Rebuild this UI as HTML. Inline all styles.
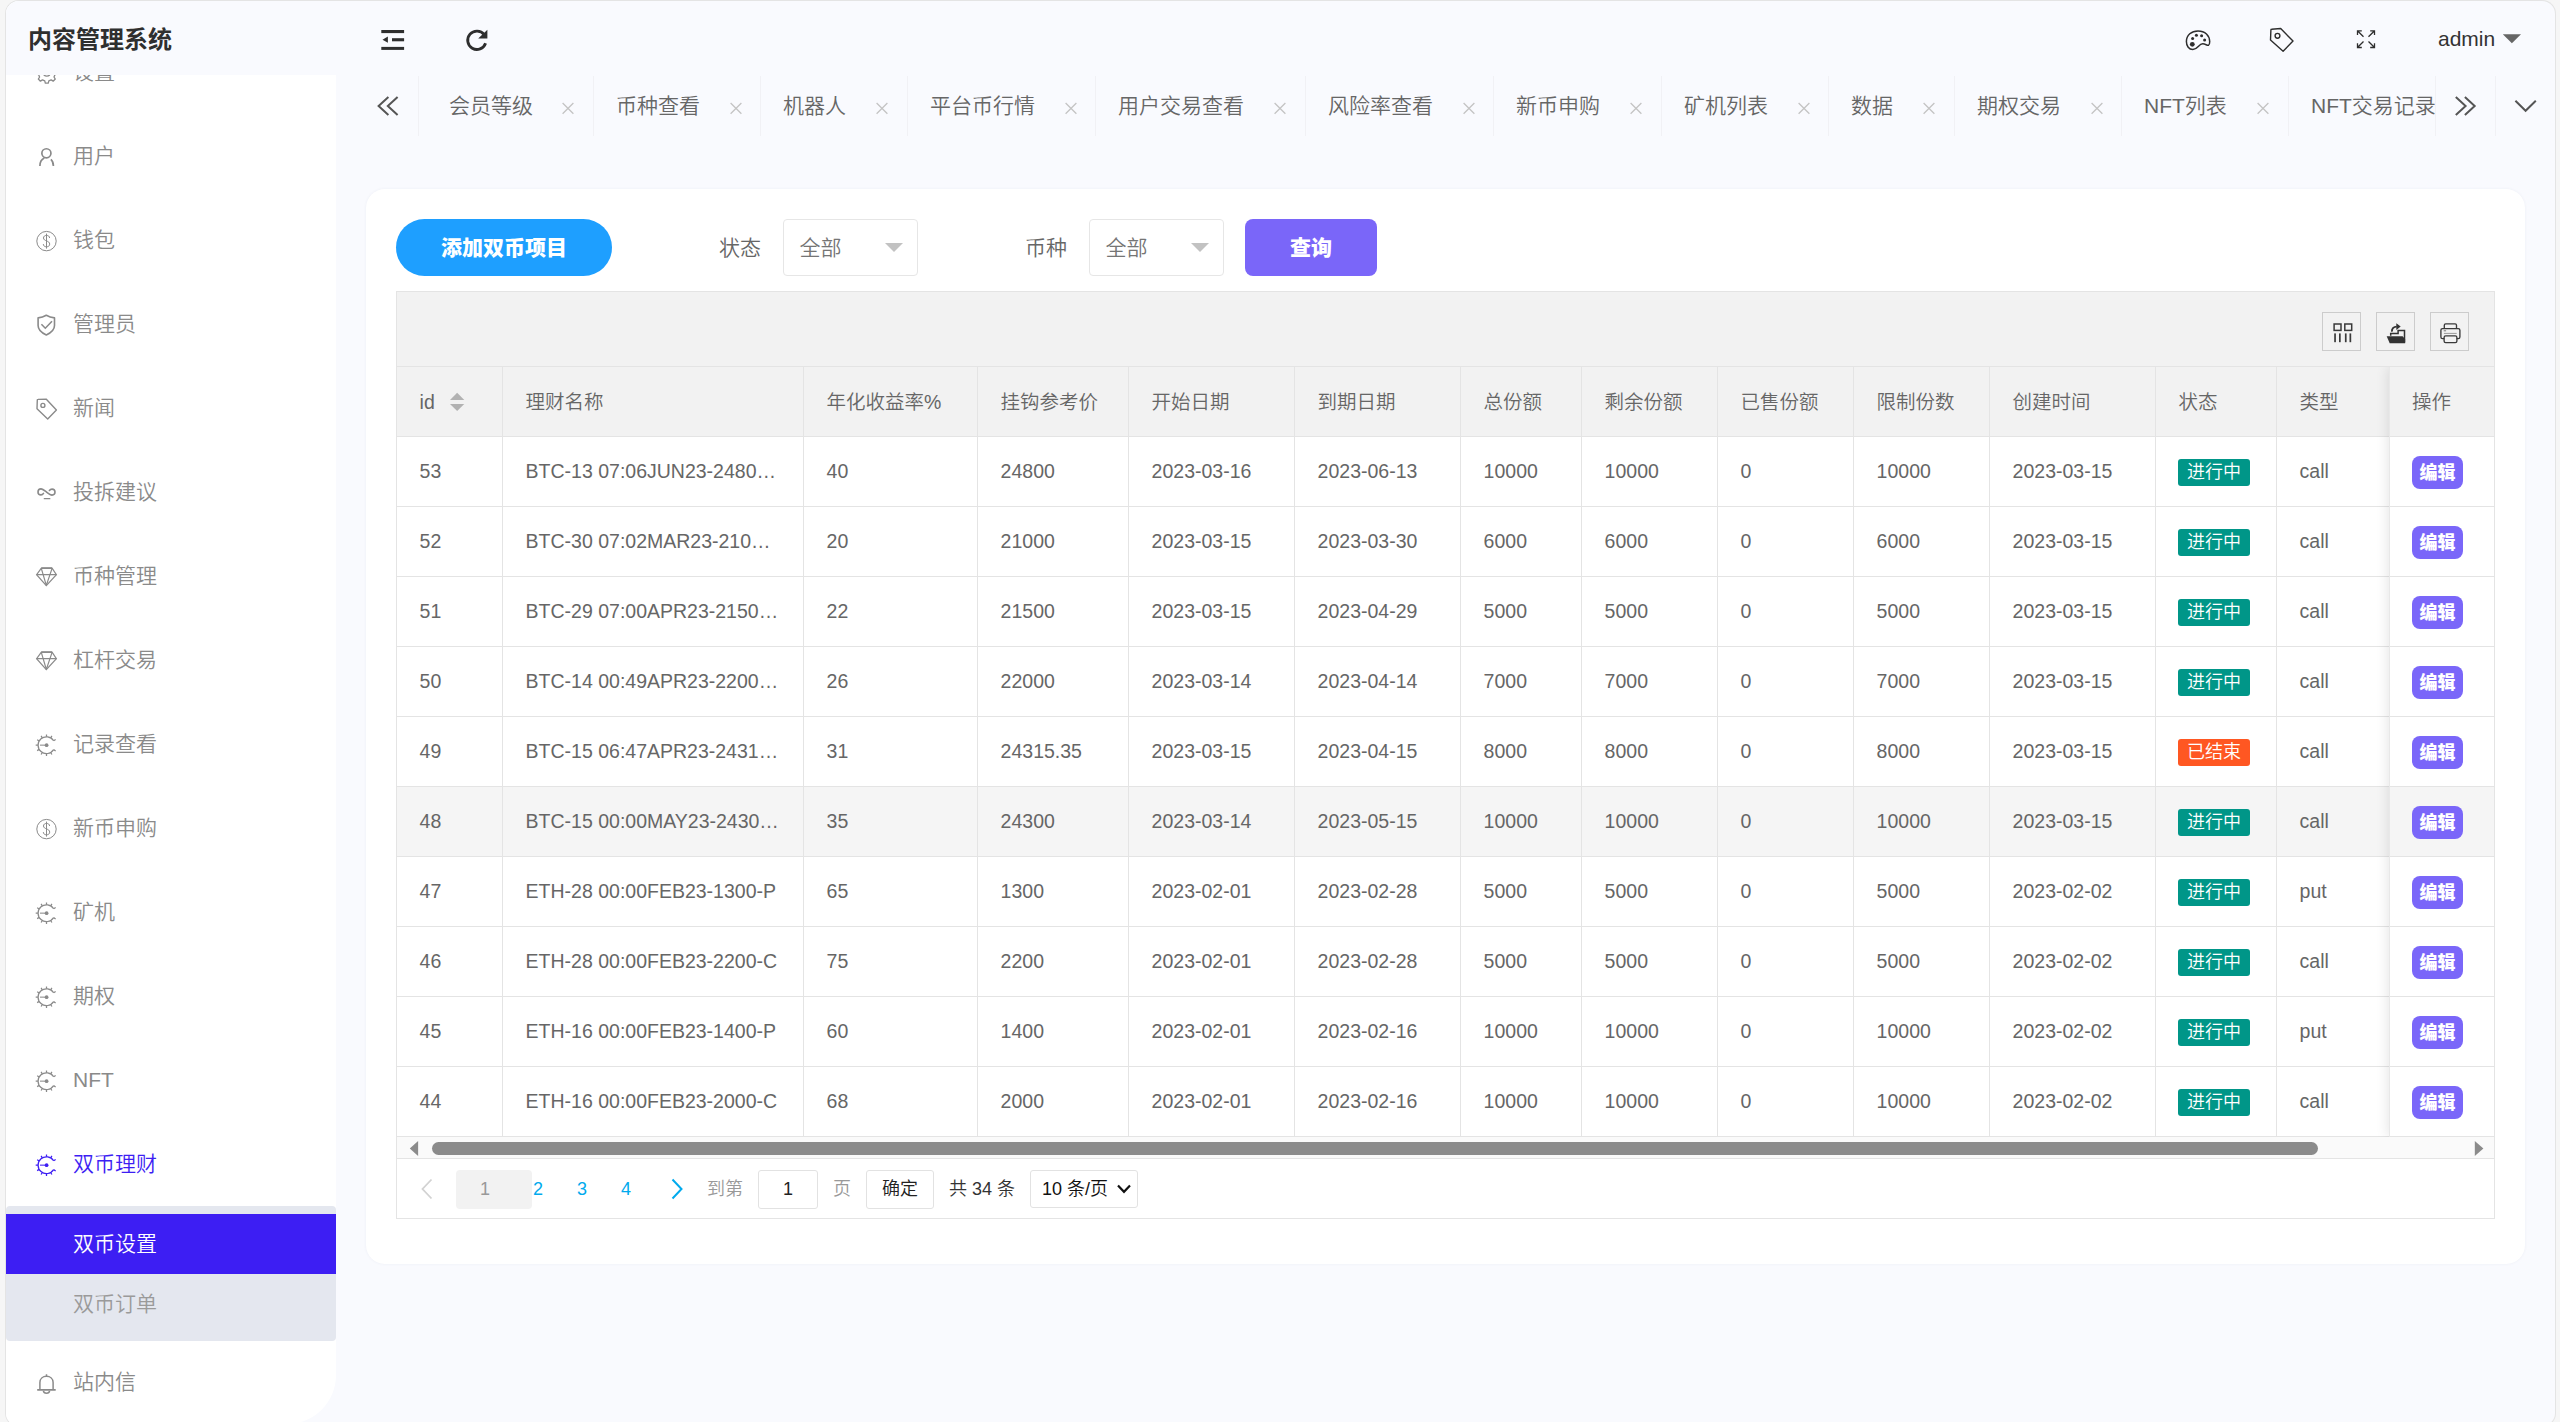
<!DOCTYPE html>
<html lang="zh-CN">
<head>
<meta charset="utf-8">
<title>内容管理系统</title>
<style>
*{box-sizing:border-box;margin:0;padding:0}
html,body{width:2560px;height:1422px;overflow:hidden;background:#f6f6f6}
body{font-family:"Liberation Sans","Noto Sans CJK SC",sans-serif;color:#666;position:relative;font-weight:350}
.abs{position:absolute}
#win{position:absolute;left:6px;top:1px;width:2549px;height:1424.5px;background:#f9fafe;border-radius:13px;box-shadow:0 0 0 1px #e4e4e4,0 0 2px rgba(0,0,0,.06);overflow:hidden}
/* everything inside #win is positioned in page coords via #pg offset */
#pg{position:absolute;left:-6px;top:-1px;width:2560px;height:1422px}
/* sidebar */
#side{position:absolute;left:6px;top:0;width:330px;height:1424px;background:#fff;border-bottom-right-radius:49px;overflow:hidden}
#logo{position:absolute;left:6px;top:0;width:330px;height:75px;background:#f9fafe;z-index:5}
#logo span{position:absolute;left:22px;top:22px;font-size:24px;line-height:36px;font-weight:700;color:#2f2f2f;white-space:nowrap;letter-spacing:0}
.mi{position:absolute;left:0;width:330px;height:60px;line-height:60px;font-size:21px;color:#8a8a8a;white-space:nowrap;font-weight:350}
.mi .tx{position:absolute;left:67px;top:0}
.mi svg{position:absolute;left:30px;top:19px;width:22px;height:22px;overflow:visible}
.mi.on{color:#3d1ef3}
#sub{position:absolute;left:0;top:1206px;width:330px;height:135px;background:#e4e7ef;border-radius:4px}
#sub .s1{position:absolute;left:0;top:8px;width:330px;height:60px;background:#3d1ef3;color:#fff;font-size:21px;line-height:60px;padding-left:67px;font-weight:350}
#sub .s2{position:absolute;left:0;top:68px;width:330px;height:60px;color:#9a9a9a;font-size:21px;line-height:60px;padding-left:67px;font-weight:350}
/* header */
.hic{position:absolute}
#admin{position:absolute;left:2438px;top:24px;font-size:21px;line-height:30px;color:#333;white-space:nowrap}
/* tabs */
.tsep{position:absolute;top:76px;width:1px;height:60px;background:#f1f1f5}
.tab{position:absolute;top:76px;height:60px;line-height:60px;font-size:21px;color:#666;white-space:nowrap;font-weight:350}
.tx2{position:absolute;top:76px;height:60px}
/* card */
#card{position:absolute;left:366px;top:189px;width:2159px;height:1074.5px;background:#fff;border-radius:19px;box-shadow:0 0 3px rgba(70,80,130,.07)}
</style>
</head>
<body>
<div id="win"><div id="pg">

<!-- SIDEBAR -->
<div id="side">
<!--MENU-->
<div class="mi" style="top:42px"><svg viewBox="0 0 22 22"><g stroke="currentColor" fill="none" stroke-width="1.3" stroke-linejoin="round"><circle cx="10.8" cy="11.7" r="3.4"/><path d="M12.83 19.85L12.28 22.20L9.32 22.20L8.77 19.85L6.47 18.90L4.42 20.17L2.33 18.08L3.60 16.03L2.65 13.73L0.30 13.18L0.30 10.22L2.65 9.67L3.60 7.37L2.33 5.32L4.42 3.23L6.47 4.50L8.77 3.55L9.32 1.20L12.28 1.20L12.83 3.55L15.13 4.50L17.18 3.23L19.27 5.32L18.00 7.37L18.95 9.67L21.30 10.22L21.30 13.18L18.95 13.73L18.00 16.03L19.27 18.08L17.18 20.17L15.13 18.90Z"/></g></svg><span class="tx">设置</span></div>
<div class="mi" style="top:126px"><svg viewBox="0 0 22 22"><g stroke="currentColor" fill="none" stroke-width="1.7" stroke-linecap="butt"><circle cx="10.4" cy="8.3" r="4.55"/><path d="M3.9 20.9C3.9 17 5.6 14.3 8.3 13"/><path d="M14.9 14.3C16.6 15.8 17.4 18 17.4 20.9"/></g></svg><span class="tx">用户</span></div>
<div class="mi" style="top:210px"><svg viewBox="0 0 22 22"><g stroke="currentColor" fill="none" stroke-width="1"><circle cx="10.5" cy="12.1" r="9.7"/><path d="M13.6 9C13.5 7.2 12.2 6.4 10.5 6.4C8.8 6.4 7.5 7.3 7.5 9C7.5 12.4 13.7 11.4 13.7 15.1C13.7 16.9 12.3 17.8 10.5 17.8C8.7 17.8 7.4 16.9 7.3 15.1M10.5 4.6V19.6"/></g></svg><span class="tx">钱包</span></div>
<div class="mi" style="top:294px"><svg viewBox="0 0 22 22"><g stroke="currentColor" fill="none" stroke-width="1.6" stroke-linejoin="round"><path d="M10.3 2.2C8 3.6 5 4.6 2.1 4.9V12.5C2.1 17 6 20 10.3 21.9C14.6 20 18.5 17 18.5 12.5V4.9C15.6 4.6 12.6 3.6 10.3 2.2Z"/><path d="M5.4 11.3L9.3 15.2L16 8.3" stroke-linejoin="miter"/></g></svg><span class="tx">管理员</span></div>
<div class="mi" style="top:378px"><svg viewBox="0 0 22 22"><g stroke="currentColor" fill="none" stroke-width="1.4" stroke-linejoin="round"><path d="M2 2.4L10.1 2.1L20.4 13.1L11.7 21.9L1 11.8L1.3 3.1Q1.3 2.4 2 2.4Z"/><circle cx="6.9" cy="8.4" r="2"/></g></svg><span class="tx">新闻</span></div>
<div class="mi" style="top:462px"><svg viewBox="0 0 22 22"><g stroke="currentColor" fill="none" stroke-width="1.6" stroke-linecap="round"><path d="M7.5 12.4C6.8 13.5 6 13.9 5 13.9A3 3 0 0 1 5 7.9C6.6 7.9 7.8 8.9 10.5 11C13.2 13.1 14.4 14.1 16 14.1A3 3 0 0 0 16 8.1C15 8.1 14.1 8.5 13.4 9.5"/><path d="M8.3 17.7H13.8" stroke-width="1.3"/></g></svg><span class="tx">投拆建议</span></div>
<div class="mi" style="top:546px"><svg viewBox="0 0 22 22"><g stroke="currentColor" fill="none" stroke-width="1.2" stroke-linejoin="miter"><path d="M5.2 3.4H16.2L20.4 9.6L10.3 20.6L0.6 9.6Z"/><path d="M5.2 3.1H16.2" stroke-width="1.8"/><path d="M0.6 9.6H20.4M5.3 3.4L10.3 20.4M16.1 3.4L10.3 20.4"/></g></svg><span class="tx">币种管理</span></div>
<div class="mi" style="top:630px"><svg viewBox="0 0 22 22"><g stroke="currentColor" fill="none" stroke-width="1.2" stroke-linejoin="miter"><path d="M5.2 3.4H16.2L20.4 9.6L10.3 20.6L0.6 9.6Z"/><path d="M5.2 3.1H16.2" stroke-width="1.8"/><path d="M0.6 9.6H20.4M5.3 3.4L10.3 20.4M16.1 3.4L10.3 20.4"/></g></svg><span class="tx">杠杆交易</span></div>
<div class="mi" style="top:714px"><svg viewBox="0 0 22 22"><g stroke="currentColor" fill="none" stroke-width="1.25"><path d="M17.62 7.75A8.4 8.4 0 1 0 17.62 16.65"/><path d="M17.62 7.75L19.66 6.48M14.70 4.93L15.90 2.85M10.50 3.80L10.50 1.40M6.30 4.93L5.10 2.85M3.23 8.00L1.15 6.80M2.10 12.20L-0.30 12.20M3.23 16.40L1.15 17.60M6.30 19.47L5.10 21.55M10.50 20.60L10.50 23.00M14.70 19.47L15.90 21.55M17.62 16.65L19.66 17.92"/><path d="M4 12.2H10" stroke-width="1.5" opacity=".7"/></g><circle cx="10.6" cy="12.2" r="1.85" fill="currentColor"/></svg><span class="tx">记录查看</span></div>
<div class="mi" style="top:798px"><svg viewBox="0 0 22 22"><g stroke="currentColor" fill="none" stroke-width="1"><circle cx="10.5" cy="12.1" r="9.7"/><path d="M13.6 9C13.5 7.2 12.2 6.4 10.5 6.4C8.8 6.4 7.5 7.3 7.5 9C7.5 12.4 13.7 11.4 13.7 15.1C13.7 16.9 12.3 17.8 10.5 17.8C8.7 17.8 7.4 16.9 7.3 15.1M10.5 4.6V19.6"/></g></svg><span class="tx">新币申购</span></div>
<div class="mi" style="top:882px"><svg viewBox="0 0 22 22"><g stroke="currentColor" fill="none" stroke-width="1.25"><path d="M17.62 7.75A8.4 8.4 0 1 0 17.62 16.65"/><path d="M17.62 7.75L19.66 6.48M14.70 4.93L15.90 2.85M10.50 3.80L10.50 1.40M6.30 4.93L5.10 2.85M3.23 8.00L1.15 6.80M2.10 12.20L-0.30 12.20M3.23 16.40L1.15 17.60M6.30 19.47L5.10 21.55M10.50 20.60L10.50 23.00M14.70 19.47L15.90 21.55M17.62 16.65L19.66 17.92"/><path d="M4 12.2H10" stroke-width="1.5" opacity=".7"/></g><circle cx="10.6" cy="12.2" r="1.85" fill="currentColor"/></svg><span class="tx">矿机</span></div>
<div class="mi" style="top:966px"><svg viewBox="0 0 22 22"><g stroke="currentColor" fill="none" stroke-width="1.25"><path d="M17.62 7.75A8.4 8.4 0 1 0 17.62 16.65"/><path d="M17.62 7.75L19.66 6.48M14.70 4.93L15.90 2.85M10.50 3.80L10.50 1.40M6.30 4.93L5.10 2.85M3.23 8.00L1.15 6.80M2.10 12.20L-0.30 12.20M3.23 16.40L1.15 17.60M6.30 19.47L5.10 21.55M10.50 20.60L10.50 23.00M14.70 19.47L15.90 21.55M17.62 16.65L19.66 17.92"/><path d="M4 12.2H10" stroke-width="1.5" opacity=".7"/></g><circle cx="10.6" cy="12.2" r="1.85" fill="currentColor"/></svg><span class="tx">期权</span></div>
<div class="mi" style="top:1050px"><svg viewBox="0 0 22 22"><g stroke="currentColor" fill="none" stroke-width="1.25"><path d="M17.62 7.75A8.4 8.4 0 1 0 17.62 16.65"/><path d="M17.62 7.75L19.66 6.48M14.70 4.93L15.90 2.85M10.50 3.80L10.50 1.40M6.30 4.93L5.10 2.85M3.23 8.00L1.15 6.80M2.10 12.20L-0.30 12.20M3.23 16.40L1.15 17.60M6.30 19.47L5.10 21.55M10.50 20.60L10.50 23.00M14.70 19.47L15.90 21.55M17.62 16.65L19.66 17.92"/><path d="M4 12.2H10" stroke-width="1.5" opacity=".7"/></g><circle cx="10.6" cy="12.2" r="1.85" fill="currentColor"/></svg><span class="tx">NFT</span></div>
<div class="mi on" style="top:1134px"><svg viewBox="0 0 22 22"><g stroke="currentColor" fill="none" stroke-width="1.25"><path d="M17.62 7.75A8.4 8.4 0 1 0 17.62 16.65"/><path d="M17.62 7.75L19.66 6.48M14.70 4.93L15.90 2.85M10.50 3.80L10.50 1.40M6.30 4.93L5.10 2.85M3.23 8.00L1.15 6.80M2.10 12.20L-0.30 12.20M3.23 16.40L1.15 17.60M6.30 19.47L5.10 21.55M10.50 20.60L10.50 23.00M14.70 19.47L15.90 21.55M17.62 16.65L19.66 17.92"/><path d="M4 12.2H10" stroke-width="1.5" opacity=".7"/></g><circle cx="10.6" cy="12.2" r="1.85" fill="currentColor"/></svg><span class="tx">双币理财</span></div>
<div class="mi" style="top:1352px"><svg viewBox="0 0 22 22"><g stroke="currentColor" fill="none" stroke-width="1.5"><path d="M3.9 18.6V11.6C3.9 7.8 6.8 5.3 10.5 5.3C14.2 5.3 17.1 7.8 17.1 11.6V18.6"/><path d="M1.2 18.9H19.7" stroke-width="1.8"/><path d="M10.5 3.3V5.3"/><path d="M7.4 19.8C7.6 21.4 8.9 22.2 10.5 22.2C12.1 22.2 13.4 21.4 13.6 19.8"/></g></svg><span class="tx">站内信</span></div>
<div id="sub"><div class="s1">双币设置</div><div class="s2">双币订单</div></div>
<!--/MENU-->
</div>
<div id="logo"><span>内容管理系统</span></div>

<!-- HEADER -->
<!--HEADER-->
<svg class="hic" style="left:381px;top:29px" width="24" height="22" viewBox="0 0 24 22"><g fill="#2e2e2e"><rect x="0.3" y="1" width="22.8" height="3.1"/><rect x="11" y="9.2" width="12.1" height="3.1"/><rect x="0.3" y="17.9" width="22.8" height="3"/><path d="M1.5 10.7L6.9 7.6V13.8Z"/></g></svg>
<svg class="hic" style="left:465px;top:28px" width="24" height="24" viewBox="0 0 24 24"><path d="M19.2 6.6A9.2 9.2 0 1 0 20.6 15.3" fill="none" stroke="#2e2e2e" stroke-width="2.8"/><path d="M22.4 1.7V10.5H13.2Z" fill="#2e2e2e"/></svg>
<svg class="hic" style="left:2185px;top:29px" width="26" height="22" viewBox="0 0 26 22"><path d="M7.8 20.6C4 20.6 1.4 17 1.4 12.5C1.4 6 6.5 1.9 13 1.9C20 1.9 24.7 6.5 24.7 12.6C24.7 14.5 24.4 15.8 23.6 16.2C22.2 16.8 20.5 14.8 17.8 14.8C13.6 14.8 12.8 20.6 7.8 20.6Z" fill="none" stroke="#2e2e2e" stroke-width="1.5"/><g fill="#2e2e2e"><circle cx="11.4" cy="6.3" r="1.5"/><circle cx="16.6" cy="6.8" r="1.5"/><circle cx="7.6" cy="9.6" r="1.5"/><circle cx="19.6" cy="11" r="1.5"/><circle cx="7.3" cy="15.3" r="2.4"/></g></svg>
<svg class="hic" style="left:2269px;top:27px" width="26" height="26" viewBox="0 0 26 26"><g fill="none" stroke="#2e2e2e" stroke-width="1.4" stroke-linejoin="round"><path d="M2.6 2.3L11.7 1.5L24 14L14.1 24.2L1.5 12.9L1.9 3Q1.9 2.3 2.6 2.3Z"/><circle cx="8.5" cy="8.8" r="2.4"/></g></svg>
<svg class="hic" style="left:2356px;top:29px" width="21" height="21" viewBox="0 0 21 21"><g fill="none" stroke="#2e2e2e" stroke-width="1.3"><path d="M5.8 1.8H1.5V6.1M1.7 2L7.5 7.8"/><path d="M14.2 1.8H18.5V6.1M18.3 2L12.5 7.8"/><path d="M5.8 18.5H1.5V14.2M1.7 18.3L7.5 12.5"/><path d="M14.2 18.5H18.5V14.2M18.3 18.3L12.5 12.5"/></g></svg>
<div id="admin">admin</div>
<svg class="hic" style="left:2502px;top:34px" width="20" height="10" viewBox="0 0 20 10"><path d="M0.8 0.2H19L9.9 9.2Z" fill="#666"/></svg>
<!--/HEADER-->

<!-- TABS -->
<!--TABS-->
<div class="tsep" style="left:418px"></div>
<div class="tsep" style="left:593px"></div>
<div class="tsep" style="left:760px"></div>
<div class="tsep" style="left:907px"></div>
<div class="tsep" style="left:1095px"></div>
<div class="tsep" style="left:1305px"></div>
<div class="tsep" style="left:1493px"></div>
<div class="tsep" style="left:1661px"></div>
<div class="tsep" style="left:1828px"></div>
<div class="tsep" style="left:1954px"></div>
<div class="tsep" style="left:2121px"></div>
<div class="tsep" style="left:2288px"></div>
<div class="tsep" style="left:2435px"></div>
<div class="tsep" style="left:2495px"></div>
<div class="tab" style="left:449.0px">会员等级</div>
<div class="tab" style="left:616.0px">币种查看</div>
<div class="tab" style="left:783.0px">机器人</div>
<div class="tab" style="left:930.0px">平台币行情</div>
<div class="tab" style="left:1118.0px">用户交易查看</div>
<div class="tab" style="left:1328.0px">风险率查看</div>
<div class="tab" style="left:1516.0px">新币申购</div>
<div class="tab" style="left:1684.0px">矿机列表</div>
<div class="tab" style="left:1851.0px">数据</div>
<div class="tab" style="left:1977.0px">期权交易</div>
<div class="tab" style="left:2144.0px">NFT列表</div>
<div class="tab" style="left:2311.0px;width:124.0px;overflow:hidden">NFT交易记录</div>
<svg class="tx2" style="left:561.0px" width="14" height="60" viewBox="0 0 14 60"><path d="M1.6 27L12.4 37.8M12.4 27L1.6 37.8" stroke="#c4c4c4" stroke-width="1.3" fill="none"/></svg>
<svg class="tx2" style="left:729.0px" width="14" height="60" viewBox="0 0 14 60"><path d="M1.6 27L12.4 37.8M12.4 27L1.6 37.8" stroke="#c4c4c4" stroke-width="1.3" fill="none"/></svg>
<svg class="tx2" style="left:875.0px" width="14" height="60" viewBox="0 0 14 60"><path d="M1.6 27L12.4 37.8M12.4 27L1.6 37.8" stroke="#c4c4c4" stroke-width="1.3" fill="none"/></svg>
<svg class="tx2" style="left:1064.0px" width="14" height="60" viewBox="0 0 14 60"><path d="M1.6 27L12.4 37.8M12.4 27L1.6 37.8" stroke="#c4c4c4" stroke-width="1.3" fill="none"/></svg>
<svg class="tx2" style="left:1273.0px" width="14" height="60" viewBox="0 0 14 60"><path d="M1.6 27L12.4 37.8M12.4 27L1.6 37.8" stroke="#c4c4c4" stroke-width="1.3" fill="none"/></svg>
<svg class="tx2" style="left:1462.0px" width="14" height="60" viewBox="0 0 14 60"><path d="M1.6 27L12.4 37.8M12.4 27L1.6 37.8" stroke="#c4c4c4" stroke-width="1.3" fill="none"/></svg>
<svg class="tx2" style="left:1629.0px" width="14" height="60" viewBox="0 0 14 60"><path d="M1.6 27L12.4 37.8M12.4 27L1.6 37.8" stroke="#c4c4c4" stroke-width="1.3" fill="none"/></svg>
<svg class="tx2" style="left:1797.0px" width="14" height="60" viewBox="0 0 14 60"><path d="M1.6 27L12.4 37.8M12.4 27L1.6 37.8" stroke="#c4c4c4" stroke-width="1.3" fill="none"/></svg>
<svg class="tx2" style="left:1922.0px" width="14" height="60" viewBox="0 0 14 60"><path d="M1.6 27L12.4 37.8M12.4 27L1.6 37.8" stroke="#c4c4c4" stroke-width="1.3" fill="none"/></svg>
<svg class="tx2" style="left:2090.0px" width="14" height="60" viewBox="0 0 14 60"><path d="M1.6 27L12.4 37.8M12.4 27L1.6 37.8" stroke="#c4c4c4" stroke-width="1.3" fill="none"/></svg>
<svg class="tx2" style="left:2256.0px" width="14" height="60" viewBox="0 0 14 60"><path d="M1.6 27L12.4 37.8M12.4 27L1.6 37.8" stroke="#c4c4c4" stroke-width="1.3" fill="none"/></svg>
<svg class="hic" style="left:376px;top:95px" width="24" height="22" viewBox="0 0 24 22"><path d="M12.4 1.9L2.6 11L12.4 20.1M21.6 1.9L11.8 11L21.6 20.1" fill="none" stroke="#555" stroke-width="2"/></svg>
<svg class="hic" style="left:2453px;top:95px" width="24" height="22" viewBox="0 0 24 22"><path d="M2.8 1.9L12.6 11L2.8 20.1M11.9 1.9L21.7 11L11.9 20.1" fill="none" stroke="#555" stroke-width="2"/></svg>
<svg class="hic" style="left:2513px;top:98px" width="26" height="16" viewBox="0 0 26 16"><path d="M2.4 2.8L12.6 12.8L22.8 2.8" fill="none" stroke="#555" stroke-width="2"/></svg>
<!--/TABS-->

<!-- CARD -->
<div id="card"></div>
<!--CARDCONTENT-->
<style>
.btn1{position:absolute;left:396px;top:219px;width:216px;height:57px;border-radius:29px;background:#1e9fff;color:#fff;font-size:21px;font-weight:900;line-height:57px;text-align:center}
.lbl{position:absolute;top:219px;height:57px;line-height:57px;font-size:21px;color:#666}
.sel{position:absolute;top:219px;height:57px;width:135px;border:1px solid #e6e6e6;border-radius:4px;background:#fff;font-size:21px;line-height:55px;padding-left:15.5px;color:#757575}
.sel:after{content:"";position:absolute;left:101px;top:23px;border:9px solid transparent;border-top-color:#c2c2c2;border-bottom-width:0}
.btn2{position:absolute;left:1245px;top:219px;width:132px;height:57px;border-radius:8px;background:#7a66f9;color:#fff;font-size:21px;font-weight:900;line-height:57px;text-align:center}
#tbl{position:absolute;left:396px;top:291px;width:2099px;height:928px;border:1px solid #e4e4e4;background:#fff}
#tool{position:absolute;left:397px;top:292px;width:2097px;height:75px;background:#f2f2f2;border-bottom:1px solid #e4e4e4}
.tb{position:absolute;top:312px;width:39px;height:39px;border:1px solid #ccc}
#thead{position:absolute;left:397px;top:367px;width:2097px;height:70px;background:#f2f2f2;border-bottom:1px solid #e4e4e4}
.row{position:absolute;left:397px;width:2097px;height:70px;border-bottom:1px solid #e4e4e4}
.row.hv{background:#f5f5f5}
.vl{position:absolute;top:367px;width:1px;height:770px;background:#e4e4e4}
.c{position:absolute;font-size:19.5px;line-height:30px;height:30px;color:#666;white-space:nowrap}
.bd{position:absolute;width:72px;height:27px;line-height:27px;border-radius:3px;font-size:18px;color:#fff;text-align:center;background:#009688}
.bd.o{background:#ff5722}
.eb{position:absolute;left:2412px;width:51px;height:33px;line-height:35px;border-radius:8px;font-size:18px;font-weight:900;color:#fff;text-align:center;background:#7a66f9}
#fix{position:absolute;left:2389px;top:367px;width:105px;height:770px;background:#fff;border-left:1px solid #e8e8e8;box-shadow:-1px 0 12px rgba(0,0,0,.11);clip-path:inset(0 0 0 -24px)}
#fixh{position:absolute;left:0;top:0;width:104px;height:70px;background:#f2f2f2;border-bottom:1px solid #e4e4e4}
.fr{position:absolute;left:0;width:104px;height:70px;border-bottom:1px solid #e4e4e4}
#sbar{position:absolute;left:397px;top:1137px;width:2097px;height:22px;background:#fafafa;border-bottom:1px solid #e4e4e4}
#thumb{position:absolute;left:432px;top:1142px;width:1886px;height:13px;border-radius:6.5px;background:#8b8b8b}
.pg{position:absolute;font-size:18px;line-height:38px;height:38px;top:1170px;white-space:nowrap}
</style>
<div class="btn1">添加双币项目</div>
<div class="lbl" style="left:719px">状态</div><div class="sel" style="left:783px">全部</div>
<div class="lbl" style="left:1025px">币种</div><div class="sel" style="left:1089px">全部</div>
<div class="btn2">查询</div>
<div id="tbl"></div><div id="tool"></div>
<div class="tb" style="left:2322px"><svg width="37" height="37" viewBox="0.7 0.6 37 37" style="position:absolute;left:0;top:0"><g fill="none" stroke="#3a3a3a" stroke-width="1.5"><rect x="11.8" y="11.6" width="6.9" height="6.4"/><rect x="22.5" y="11.6" width="6.9" height="6.4"/></g><g fill="#3a3a3a"><rect x="11.9" y="21" width="1.7" height="8.8"/><rect x="16.7" y="21" width="1.7" height="8.8"/><rect x="22.6" y="21" width="1.7" height="8.8"/><rect x="27.2" y="21" width="1.7" height="8.8"/></g></svg></div>
<div class="tb" style="left:2376px"><svg width="37" height="37" viewBox="0.7 0.6 37 37" style="position:absolute;left:0;top:0"><path d="M10.4 23.8H26.3L28.8 26.6V30.8H13.4Z" fill="#333"/><path d="M14.4 23.4V21.1H21.8V18.1H28.2V30" fill="none" stroke="#333" stroke-width="1.5"/><path d="M15.6 19.2C15.4 16 17.6 14.2 20.4 14.2" fill="none" stroke="#333" stroke-width="1.9"/><path d="M20 10.8L24.4 14.2L20 17.6Z" fill="#333"/></svg></div>
<div class="tb" style="left:2430px"><svg width="37" height="37" viewBox="0.7 0.6 37 37" style="position:absolute;left:0;top:0"><g fill="none" stroke="#3a3a3a" stroke-width="1.35"><path d="M14 16V12.8Q14 11.4 15.4 11.4H24.8Q26.2 11.4 26.2 12.8V16"/><path d="M14 26.2H12.2Q10.6 26.2 10.6 24.6V17.8Q10.6 16.2 12.2 16.2H28Q29.6 16.2 29.6 17.8V24.6Q29.6 26.2 28 26.2H26.4"/><rect x="13.8" y="23.4" width="12.8" height="6.8" rx="1.6"/></g><path d="M13.6 21H26.4" stroke="#9a9a9a" stroke-width="1"/><path d="M13.4 18.4H15.8" stroke="#777" stroke-width="1"/></svg></div>
<div id="thead"></div>
<div class="row" style="top:437.0px"></div>
<div class="row" style="top:507.0px"></div>
<div class="row" style="top:577.0px"></div>
<div class="row" style="top:647.0px"></div>
<div class="row" style="top:717.0px"></div>
<div class="row hv" style="top:787.0px"></div>
<div class="row" style="top:857.0px"></div>
<div class="row" style="top:927.0px"></div>
<div class="row" style="top:997.0px"></div>
<div class="row" style="top:1067.0px"></div>
<div class="vl" style="left:502px"></div>
<div class="vl" style="left:803px"></div>
<div class="vl" style="left:977px"></div>
<div class="vl" style="left:1128px"></div>
<div class="vl" style="left:1294px"></div>
<div class="vl" style="left:1460px"></div>
<div class="vl" style="left:1581px"></div>
<div class="vl" style="left:1717px"></div>
<div class="vl" style="left:1853px"></div>
<div class="vl" style="left:1989px"></div>
<div class="vl" style="left:2155px"></div>
<div class="vl" style="left:2276px"></div>
<div class="c" style="left:419.6px;top:387px">id</div>
<div class="c" style="left:525.6px;top:387px">理财名称</div>
<div class="c" style="left:826.6px;top:387px">年化收益率%</div>
<div class="c" style="left:1000.6px;top:387px">挂钩参考价</div>
<div class="c" style="left:1151.6px;top:387px">开始日期</div>
<div class="c" style="left:1317.6px;top:387px">到期日期</div>
<div class="c" style="left:1483.6px;top:387px">总份额</div>
<div class="c" style="left:1604.6px;top:387px">剩余份额</div>
<div class="c" style="left:1740.6px;top:387px">已售份额</div>
<div class="c" style="left:1876.6px;top:387px">限制份数</div>
<div class="c" style="left:2012.6px;top:387px">创建时间</div>
<div class="c" style="left:2178.6px;top:387px">状态</div>
<div class="c" style="left:2299.6px;top:387px">类型</div>
<svg class="abs" style="left:448px;top:391px" width="18" height="22" viewBox="0 0 18 22"><path d="M2 9H16.3L9.15 1.8Z" fill="#b2b2b2"/><path d="M2 12.9H16.3L9.15 20.1Z" fill="#b2b2b2"/></svg>
<div class="c" style="left:419.6px;top:455.5px">53</div>
<div class="c" style="left:525.6px;top:455.5px">BTC-13 07:06JUN23-2480…</div>
<div class="c" style="left:826.6px;top:455.5px">40</div>
<div class="c" style="left:1000.6px;top:455.5px">24800</div>
<div class="c" style="left:1151.6px;top:455.5px">2023-03-16</div>
<div class="c" style="left:1317.6px;top:455.5px">2023-06-13</div>
<div class="c" style="left:1483.6px;top:455.5px">10000</div>
<div class="c" style="left:1604.6px;top:455.5px">10000</div>
<div class="c" style="left:1740.6px;top:455.5px">0</div>
<div class="c" style="left:1876.6px;top:455.5px">10000</div>
<div class="c" style="left:2012.6px;top:455.5px">2023-03-15</div>
<div class="bd" style="left:2178px;top:458.7px">进行中</div>
<div class="c" style="left:2299.6px;top:455.5px">call</div>
<div class="c" style="left:419.6px;top:525.5px">52</div>
<div class="c" style="left:525.6px;top:525.5px">BTC-30 07:02MAR23-210…</div>
<div class="c" style="left:826.6px;top:525.5px">20</div>
<div class="c" style="left:1000.6px;top:525.5px">21000</div>
<div class="c" style="left:1151.6px;top:525.5px">2023-03-15</div>
<div class="c" style="left:1317.6px;top:525.5px">2023-03-30</div>
<div class="c" style="left:1483.6px;top:525.5px">6000</div>
<div class="c" style="left:1604.6px;top:525.5px">6000</div>
<div class="c" style="left:1740.6px;top:525.5px">0</div>
<div class="c" style="left:1876.6px;top:525.5px">6000</div>
<div class="c" style="left:2012.6px;top:525.5px">2023-03-15</div>
<div class="bd" style="left:2178px;top:528.7px">进行中</div>
<div class="c" style="left:2299.6px;top:525.5px">call</div>
<div class="c" style="left:419.6px;top:595.5px">51</div>
<div class="c" style="left:525.6px;top:595.5px">BTC-29 07:00APR23-2150…</div>
<div class="c" style="left:826.6px;top:595.5px">22</div>
<div class="c" style="left:1000.6px;top:595.5px">21500</div>
<div class="c" style="left:1151.6px;top:595.5px">2023-03-15</div>
<div class="c" style="left:1317.6px;top:595.5px">2023-04-29</div>
<div class="c" style="left:1483.6px;top:595.5px">5000</div>
<div class="c" style="left:1604.6px;top:595.5px">5000</div>
<div class="c" style="left:1740.6px;top:595.5px">0</div>
<div class="c" style="left:1876.6px;top:595.5px">5000</div>
<div class="c" style="left:2012.6px;top:595.5px">2023-03-15</div>
<div class="bd" style="left:2178px;top:598.7px">进行中</div>
<div class="c" style="left:2299.6px;top:595.5px">call</div>
<div class="c" style="left:419.6px;top:665.5px">50</div>
<div class="c" style="left:525.6px;top:665.5px">BTC-14 00:49APR23-2200…</div>
<div class="c" style="left:826.6px;top:665.5px">26</div>
<div class="c" style="left:1000.6px;top:665.5px">22000</div>
<div class="c" style="left:1151.6px;top:665.5px">2023-03-14</div>
<div class="c" style="left:1317.6px;top:665.5px">2023-04-14</div>
<div class="c" style="left:1483.6px;top:665.5px">7000</div>
<div class="c" style="left:1604.6px;top:665.5px">7000</div>
<div class="c" style="left:1740.6px;top:665.5px">0</div>
<div class="c" style="left:1876.6px;top:665.5px">7000</div>
<div class="c" style="left:2012.6px;top:665.5px">2023-03-15</div>
<div class="bd" style="left:2178px;top:668.7px">进行中</div>
<div class="c" style="left:2299.6px;top:665.5px">call</div>
<div class="c" style="left:419.6px;top:735.5px">49</div>
<div class="c" style="left:525.6px;top:735.5px">BTC-15 06:47APR23-2431…</div>
<div class="c" style="left:826.6px;top:735.5px">31</div>
<div class="c" style="left:1000.6px;top:735.5px">24315.35</div>
<div class="c" style="left:1151.6px;top:735.5px">2023-03-15</div>
<div class="c" style="left:1317.6px;top:735.5px">2023-04-15</div>
<div class="c" style="left:1483.6px;top:735.5px">8000</div>
<div class="c" style="left:1604.6px;top:735.5px">8000</div>
<div class="c" style="left:1740.6px;top:735.5px">0</div>
<div class="c" style="left:1876.6px;top:735.5px">8000</div>
<div class="c" style="left:2012.6px;top:735.5px">2023-03-15</div>
<div class="bd o" style="left:2178px;top:738.7px">已结束</div>
<div class="c" style="left:2299.6px;top:735.5px">call</div>
<div class="c" style="left:419.6px;top:805.5px">48</div>
<div class="c" style="left:525.6px;top:805.5px">BTC-15 00:00MAY23-2430…</div>
<div class="c" style="left:826.6px;top:805.5px">35</div>
<div class="c" style="left:1000.6px;top:805.5px">24300</div>
<div class="c" style="left:1151.6px;top:805.5px">2023-03-14</div>
<div class="c" style="left:1317.6px;top:805.5px">2023-05-15</div>
<div class="c" style="left:1483.6px;top:805.5px">10000</div>
<div class="c" style="left:1604.6px;top:805.5px">10000</div>
<div class="c" style="left:1740.6px;top:805.5px">0</div>
<div class="c" style="left:1876.6px;top:805.5px">10000</div>
<div class="c" style="left:2012.6px;top:805.5px">2023-03-15</div>
<div class="bd" style="left:2178px;top:808.7px">进行中</div>
<div class="c" style="left:2299.6px;top:805.5px">call</div>
<div class="c" style="left:419.6px;top:875.5px">47</div>
<div class="c" style="left:525.6px;top:875.5px">ETH-28 00:00FEB23-1300-P</div>
<div class="c" style="left:826.6px;top:875.5px">65</div>
<div class="c" style="left:1000.6px;top:875.5px">1300</div>
<div class="c" style="left:1151.6px;top:875.5px">2023-02-01</div>
<div class="c" style="left:1317.6px;top:875.5px">2023-02-28</div>
<div class="c" style="left:1483.6px;top:875.5px">5000</div>
<div class="c" style="left:1604.6px;top:875.5px">5000</div>
<div class="c" style="left:1740.6px;top:875.5px">0</div>
<div class="c" style="left:1876.6px;top:875.5px">5000</div>
<div class="c" style="left:2012.6px;top:875.5px">2023-02-02</div>
<div class="bd" style="left:2178px;top:878.7px">进行中</div>
<div class="c" style="left:2299.6px;top:875.5px">put</div>
<div class="c" style="left:419.6px;top:945.5px">46</div>
<div class="c" style="left:525.6px;top:945.5px">ETH-28 00:00FEB23-2200-C</div>
<div class="c" style="left:826.6px;top:945.5px">75</div>
<div class="c" style="left:1000.6px;top:945.5px">2200</div>
<div class="c" style="left:1151.6px;top:945.5px">2023-02-01</div>
<div class="c" style="left:1317.6px;top:945.5px">2023-02-28</div>
<div class="c" style="left:1483.6px;top:945.5px">5000</div>
<div class="c" style="left:1604.6px;top:945.5px">5000</div>
<div class="c" style="left:1740.6px;top:945.5px">0</div>
<div class="c" style="left:1876.6px;top:945.5px">5000</div>
<div class="c" style="left:2012.6px;top:945.5px">2023-02-02</div>
<div class="bd" style="left:2178px;top:948.7px">进行中</div>
<div class="c" style="left:2299.6px;top:945.5px">call</div>
<div class="c" style="left:419.6px;top:1015.5px">45</div>
<div class="c" style="left:525.6px;top:1015.5px">ETH-16 00:00FEB23-1400-P</div>
<div class="c" style="left:826.6px;top:1015.5px">60</div>
<div class="c" style="left:1000.6px;top:1015.5px">1400</div>
<div class="c" style="left:1151.6px;top:1015.5px">2023-02-01</div>
<div class="c" style="left:1317.6px;top:1015.5px">2023-02-16</div>
<div class="c" style="left:1483.6px;top:1015.5px">10000</div>
<div class="c" style="left:1604.6px;top:1015.5px">10000</div>
<div class="c" style="left:1740.6px;top:1015.5px">0</div>
<div class="c" style="left:1876.6px;top:1015.5px">10000</div>
<div class="c" style="left:2012.6px;top:1015.5px">2023-02-02</div>
<div class="bd" style="left:2178px;top:1018.7px">进行中</div>
<div class="c" style="left:2299.6px;top:1015.5px">put</div>
<div class="c" style="left:419.6px;top:1085.5px">44</div>
<div class="c" style="left:525.6px;top:1085.5px">ETH-16 00:00FEB23-2000-C</div>
<div class="c" style="left:826.6px;top:1085.5px">68</div>
<div class="c" style="left:1000.6px;top:1085.5px">2000</div>
<div class="c" style="left:1151.6px;top:1085.5px">2023-02-01</div>
<div class="c" style="left:1317.6px;top:1085.5px">2023-02-16</div>
<div class="c" style="left:1483.6px;top:1085.5px">10000</div>
<div class="c" style="left:1604.6px;top:1085.5px">10000</div>
<div class="c" style="left:1740.6px;top:1085.5px">0</div>
<div class="c" style="left:1876.6px;top:1085.5px">10000</div>
<div class="c" style="left:2012.6px;top:1085.5px">2023-02-02</div>
<div class="bd" style="left:2178px;top:1088.7px">进行中</div>
<div class="c" style="left:2299.6px;top:1085.5px">call</div>
<div id="fix"><div id="fixh"></div><div class="fr" style="top:70.0px"></div><div class="fr" style="top:140.0px"></div><div class="fr" style="top:210.0px"></div><div class="fr" style="top:280.0px"></div><div class="fr" style="top:350.0px"></div><div class="fr" style="top:420.0px;background:#f5f5f5"></div><div class="fr" style="top:490.0px"></div><div class="fr" style="top:560.0px"></div><div class="fr" style="top:630.0px"></div><div class="fr" style="top:700.0px"></div></div>
<div class="c" style="left:2412px;top:387px">操作</div>
<div class="eb" style="top:456.0px">编辑</div>
<div class="eb" style="top:526.0px">编辑</div>
<div class="eb" style="top:596.0px">编辑</div>
<div class="eb" style="top:666.0px">编辑</div>
<div class="eb" style="top:736.0px">编辑</div>
<div class="eb" style="top:806.0px">编辑</div>
<div class="eb" style="top:876.0px">编辑</div>
<div class="eb" style="top:946.0px">编辑</div>
<div class="eb" style="top:1016.0px">编辑</div>
<div class="eb" style="top:1086.0px">编辑</div>
<div id="sbar"></div><div id="thumb"></div>
<svg class="abs" style="left:408px;top:1139px" width="14" height="18" viewBox="0 0 14 18"><path d="M1.8 9.5L10.1 2V17Z" fill="#8b8b8b"/></svg>
<svg class="abs" style="left:2471px;top:1139px" width="14" height="18" viewBox="0 0 14 18"><path d="M12.4 9.5L3.8 1.9V17.1Z" fill="#8b8b8b"/></svg>
<svg class="abs" style="left:419px;top:1178px" width="16" height="22" viewBox="0 0 16 22"><path d="M12.5 1.5L3.5 11L12.5 20.5" fill="none" stroke="#d2d2d2" stroke-width="1.8"/></svg>
<div class="abs" style="left:456px;top:1170px;width:76px;height:39px;border-radius:4px;background:#f2f2f2"></div>
<div class="pg" style="left:480px;color:#999">1</div>
<div class="pg" style="left:533px;color:#01aaed">2</div>
<div class="pg" style="left:577px;color:#01aaed">3</div>
<div class="pg" style="left:621px;color:#01aaed">4</div>
<svg class="abs" style="left:669px;top:1178px" width="16" height="22" viewBox="0 0 16 22"><path d="M3.5 1.5L12.5 11L3.5 20.5" fill="none" stroke="#01aaed" stroke-width="2"/></svg>
<div class="pg" style="left:707px;color:#999">到第</div>
<div class="abs" style="left:758px;top:1170px;width:60px;height:39px;border:1px solid #e2e2e2;border-radius:3px;background:#fff"></div>
<div class="pg" style="left:783px;color:#222">1</div>
<div class="pg" style="left:833px;color:#999">页</div>
<div class="abs" style="left:866px;top:1170px;width:68px;height:39px;border:1px solid #e2e2e2;border-radius:3px;background:#fff"></div>
<div class="pg" style="left:882px;color:#222">确定</div>
<div class="pg" style="left:949px;color:#333">共 34 条</div>
<div class="abs" style="left:1030px;top:1170px;width:108px;height:38px;border:1px solid #e2e2e2;border-radius:3px;background:#fff"></div>
<div class="pg" style="left:1042px;color:#111;font-size:18px">10 条/页</div>
<svg class="abs" style="left:1116px;top:1182px" width="16" height="14" viewBox="0 0 16 14"><path d="M2 3.5L8 9.8L14 3.5" fill="none" stroke="#111" stroke-width="2.2"/></svg>
<!--/CARDCONTENT-->

</div></div>
</body>
</html>
